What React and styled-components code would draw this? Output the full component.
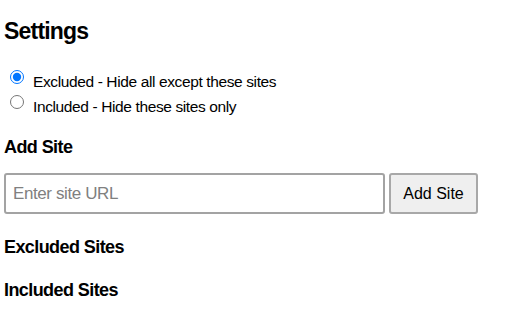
import React, { useState } from "react";
import styled, { createGlobalStyle } from "styled-components";

const GlobalStyle = createGlobalStyle`
  body {
    margin: 0;
    background: #ffffff;
    font-family: "Liberation Sans", Arial, sans-serif;
    color: #000000;
  }
`;

const Page = styled.div`
  display: flex;
  flex-direction: column;
  padding: 17px 4px 0 4px;
  width: 512px;
  height: 320px;
  box-sizing: border-box;
`;

const Title = styled.h1`
  margin: 0;
  font-size: 23px;
  line-height: 28px;
  font-weight: bold;
  letter-spacing: -0.8px;
`;

const Options = styled.div`
  display: flex;
  flex-direction: column;
  margin-top: 23.5px;
`;

const OptionRow = styled.label`
  display: flex;
  align-items: flex-start;
  height: 25px;
  line-height: 25px;
  font-size: 15.5px;
  letter-spacing: -0.38px;
`;

const Radio = styled.input`
  width: 14px;
  height: 14px;
  margin: 1px 9px 0 6px;
  accent-color: #0075ff;
`;

const Heading = styled.h3`
  margin: ${(p) => p.$top}px 0 0 0;
  font-size: 18px;
  line-height: 22px;
  font-weight: bold;
  letter-spacing: -0.58px;
`;

const AddRow = styled.div`
  display: flex;
  gap: 4px;
  margin-top: 15.5px;
  height: 41px;
`;

const UrlInput = styled.input`
  width: 381px;
  box-sizing: border-box;
  border: 2px solid #a3a3a3;
  border-radius: 3px;
  padding: 0 7px;
  font-family: "Liberation Sans", Arial, sans-serif;
  font-size: 17px;
  letter-spacing: -0.4px;
  color: #000;
  outline: none;

  &::placeholder {
    color: #808080;
  }
`;

const AddButton = styled.button`
  width: 89px;
  box-sizing: border-box;
  border: 2px solid #a8a8a8;
  border-radius: 3px;
  background: #efefef;
  font-family: "Liberation Sans", Arial, sans-serif;
  font-size: 16px;
  color: #000;
  padding: 0;
`;

export default function App() {
  const [mode, setMode] = useState("excluded");
  const [url, setUrl] = useState("");

  return (
    <>
      <GlobalStyle />
      <Page>
        <Title>Settings</Title>
        <Options>
          <OptionRow>
            <Radio
              type="radio"
              name="mode"
              checked={mode === "excluded"}
              onChange={() => setMode("excluded")}
            />
            Excluded - Hide all except these sites
          </OptionRow>
          <OptionRow>
            <Radio
              type="radio"
              name="mode"
              checked={mode === "included"}
              onChange={() => setMode("included")}
            />
            Included - Hide these sites only
          </OptionRow>
        </Options>
        <Heading $top={17}>Add Site</Heading>
        <AddRow>
          <UrlInput
            placeholder="Enter site URL"
            value={url}
            onChange={(e) => setUrl(e.target.value)}
          />
          <AddButton>Add Site</AddButton>
        </AddRow>
        <Heading $top={22}>Excluded Sites</Heading>
        <Heading $top={21}>Included Sites</Heading>
      </Page>
    </>
  );
}
